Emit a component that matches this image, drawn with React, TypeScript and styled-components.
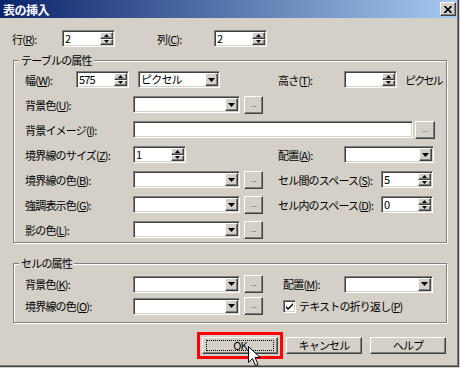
import React from 'react';
import styled, { createGlobalStyle } from 'styled-components';

const GlobalStyle = createGlobalStyle`
  html, body {
    margin: 0;
    padding: 0;
    background: #d4d0c8;
  }
  body {
    font-family: "Noto Sans CJK JP", "Noto Sans", sans-serif;
    font-size: 11px;
    color: #000;
  }
  * {
    box-sizing: border-box;
  }
`;

const Window = styled.div`
  position: relative;
  width: 460px;
  height: 368px;
  background: #d4d0c8;
  padding: 0 3px 3px 0;
  box-shadow: inset -1px -1px 0 #d4d0c8, inset -2px -2px 0 #404040, inset -3px -3px 0 #808080;
  overflow: hidden;
`;

const TitleBar = styled.div`
  display: flex;
  align-items: center;
  justify-content: space-between;
  height: 18px;
  padding: 0 1px 0 3px;
  background: linear-gradient(to right, #0a246a, #a6caf0);
`;

const Title = styled.span`
  color: #fff;
  font-weight: bold;
  font-size: 12px;
  letter-spacing: -0.5px;
`;

const raised = `
  background: #d4d0c8;
  border: 1px solid;
  border-color: #fff #404040 #404040 #fff;
  box-shadow: inset -1px -1px 0 #808080;
`;

const CloseButton = styled.div`
  ${raised}
  display: flex;
  align-items: center;
  justify-content: center;
  width: 16px;
  height: 14px;
`;

const Body = styled.div`
  padding: 12px 11px 0 12px;
`;

const TopRow = styled.div`
  display: flex;
  align-items: center;
  height: 17px;
`;

const Label = styled.span<{ $w?: number; $ml?: number }>`
  flex: none;
  width: ${(p) => (p.$w ? `${p.$w}px` : 'auto')};
  margin-left: ${(p) => p.$ml ?? 0}px;
  white-space: nowrap;
  letter-spacing: -0.8px;
  line-height: 14px;
`;

const Group = styled.fieldset<{ $top: number }>`
  width: 434px;
  margin: ${(p) => p.$top}px 0 0 1px;
  padding: 0 10px 0 11px;
  border: 1px solid #808080;
  box-shadow: 1px 1px 0 #fff, inset 1px 1px 0 #fff;
  min-width: 0;
`;

const Legend = styled.legend`
  margin-left: -6px;
  padding: 0 2px;
  line-height: 14px;
  height: 14px;
  letter-spacing: -0.8px;
  background: #d4d0c8;
`;

const Rows = styled.div<{ $pt?: number; $pb?: number }>`
  display: flex;
  flex-direction: column;
  padding: ${(p) => p.$pt ?? 0}px 0 ${(p) => p.$pb ?? 0}px;
`;

const Row = styled.div<{ $h: number }>`
  display: flex;
  align-items: center;
  height: ${(p) => p.$h}px;
`;

const Cell = styled.div<{ $w?: number }>`
  display: flex;
  align-items: center;
  flex: none;
  width: ${(p) => (p.$w ? `${p.$w}px` : 'auto')};
`;

const Sunken = styled.div<{ $w: number; $ml?: number }>`
  display: flex;
  align-items: center;
  flex: none;
  width: ${(p) => p.$w}px;
  height: 17px;
  margin-left: ${(p) => p.$ml ?? 0}px;
  padding: 1px;
  background: #fff;
  border: 1px solid;
  border-color: #808080 #fff #fff #808080;
  box-shadow: inset 1px 1px 0 #404040, inset -1px -1px 0 #d4d0c8;
`;

const Value = styled.span`
  flex: 1;
  padding-left: 1px;
  line-height: 13px;
  letter-spacing: -0.8px;
  white-space: nowrap;
`;

const SpinButtons = styled.div`
  display: flex;
  flex-direction: column;
  align-self: stretch;
  width: 13px;
`;

const SpinHalf = styled.div`
  ${raised}
  flex: 1;
  display: flex;
  align-items: center;
  justify-content: center;
`;

const DropButton = styled.div`
  ${raised}
  display: flex;
  align-items: center;
  justify-content: center;
  align-self: stretch;
  width: 13px;
`;

const DotsButton = styled.div<{ $w: number; $ml: number }>`
  ${raised}
  flex: none;
  display: flex;
  align-items: flex-end;
  justify-content: center;
  width: ${(p) => p.$w}px;
  height: 18px;
  margin-left: ${(p) => p.$ml}px;
  padding-bottom: 4px;
  font-family: "DejaVu Sans", sans-serif;
  font-size: 7px;
  line-height: 7px;
  color: #404040;
`;

const Unit = styled.span`
  margin-left: 8px;
  letter-spacing: -1.8px;
  white-space: nowrap;
`;

const CheckBox = styled.div`
  flex: none;
  display: flex;
  align-items: center;
  justify-content: center;
  width: 13px;
  height: 13px;
  margin-right: 3px;
  background: #fff;
  border: 1px solid;
  border-color: #808080 #fff #fff #808080;
  box-shadow: inset 1px 1px 0 #404040, inset -1px -1px 0 #d4d0c8;
`;

const ButtonRow = styled.div`
  display: flex;
  justify-content: flex-end;
  gap: 8px;
  margin-top: 14px;
`;

const PushButton = styled.div<{ $focused?: boolean }>`
  ${raised}
  position: relative;
  display: flex;
  align-items: center;
  justify-content: center;
  width: 76px;
  height: 17px;
  letter-spacing: -0.8px;
  line-height: 13px;
  outline: ${(p) => (p.$focused ? '3px solid #ff0000' : 'none')};
  outline-offset: 2px;
  &::after {
    content: '';
    display: ${(p) => (p.$focused ? 'block' : 'none')};
    position: absolute;
    inset: 2px 3px;
    border: 1px dotted #000;
  }
`;

const Cursor = styled.svg`
  position: absolute;
  left: 248px;
  top: 346px;
`;

function Up() {
  return (
    <svg width="5" height="3" viewBox="0 0 5 3">
      <path d="M2.5 0 L5 3 L0 3 Z" fill="#000" />
    </svg>
  );
}

function Down() {
  return (
    <svg width="5" height="3" viewBox="0 0 5 3">
      <path d="M0 0 L5 0 L2.5 3 Z" fill="#000" />
    </svg>
  );
}

function Spin({ w, value, ml }: { w: number; value?: string; ml?: number }) {
  return (
    <Sunken $w={w} $ml={ml}>
      <Value>{value}</Value>
      <SpinButtons>
        <SpinHalf>
          <Up />
        </SpinHalf>
        <SpinHalf>
          <Down />
        </SpinHalf>
      </SpinButtons>
    </Sunken>
  );
}

function Select({ w, value, ml }: { w: number; value?: string; ml?: number }) {
  return (
    <Sunken $w={w} $ml={ml}>
      <Value>{value}</Value>
      <DropButton>
        <svg width="7" height="4" viewBox="0 0 7 4">
          <path d="M0 0 L7 0 L3.5 4 Z" fill="#000" />
        </svg>
      </DropButton>
    </Sunken>
  );
}

function ColorPick() {
  return (
    <>
      <Select w={107} />
      <DotsButton $w={19} $ml={4}>...</DotsButton>
    </>
  );
}

export default function App() {
  return (
    <>
      <GlobalStyle />
      <Window>
        <TitleBar>
          <Title>表の挿入</Title>
          <CloseButton>
            <svg width="8" height="7" viewBox="0 0 8 7">
              <path d="M0.5 0 L7.5 7 M7.5 0 L0.5 7" stroke="#000" strokeWidth="1.6" />
            </svg>
          </CloseButton>
        </TitleBar>

        <Body>
          <TopRow>
            <Label $w={50}>
              行(<u>R</u>):
            </Label>
            <Spin w={53} value="2" />
            <Label $w={57} $ml={42}>
              列(<u>C</u>):
            </Label>
            <Spin w={53} value="2" />
          </TopRow>

          {/* テーブルの属性 */}
          <Group $top={6}>
            <Legend>テーブルの属性</Legend>
            <Rows>
              <Row $h={25}>
                <Cell $w={253}>
                  <Label $w={51}>
                    幅(<u>W</u>):
                  </Label>
                  <Spin w={53} value="575" />
                  <Select w={82} value="ピクセル" ml={9} />
                </Cell>
                <Cell>
                  <Label $w={66}>
                    高さ(<u>T</u>):
                  </Label>
                  <Spin w={53} />
                  <Unit>ピクセル</Unit>
                </Cell>
              </Row>
              <Row $h={25}>
                <Cell $w={253}>
                  <Label $w={108}>
                    背景色(<u>U</u>):
                  </Label>
                  <ColorPick />
                </Cell>
              </Row>
              <Row $h={25}>
                <Label $w={108}>
                  背景イメージ(<u>I</u>):
                </Label>
                <Sunken $w={280} />
                <DotsButton $w={20} $ml={2}>...</DotsButton>
              </Row>
              <Row $h={25}>
                <Cell $w={253}>
                  <Label $w={108}>
                    境界線のサイズ(<u>Z</u>):
                  </Label>
                  <Spin w={53} value="1" />
                </Cell>
                <Cell>
                  <Label $w={66}>
                    配置(<u>A</u>):
                  </Label>
                  <Select w={90} />
                </Cell>
              </Row>
              <Row $h={25}>
                <Cell $w={253}>
                  <Label $w={108}>
                    境界線の色(<u>B</u>):
                  </Label>
                  <ColorPick />
                </Cell>
                <Cell>
                  <Label $w={103}>
                    セル間のスペース(<u>S</u>):
                  </Label>
                  <Spin w={52} value="5" />
                </Cell>
              </Row>
              <Row $h={25}>
                <Cell $w={253}>
                  <Label $w={108}>
                    強調表示色(<u>G</u>):
                  </Label>
                  <ColorPick />
                </Cell>
                <Cell>
                  <Label $w={103}>
                    セル内のスペース(<u>D</u>):
                  </Label>
                  <Spin w={52} value="0" />
                </Cell>
              </Row>
              <Row $h={25}>
                <Cell $w={253}>
                  <Label $w={108}>
                    影の色(<u>L</u>):
                  </Label>
                  <ColorPick />
                </Cell>
              </Row>
            </Rows>
          </Group>

          {/* セルの属性 */}
          <Group $top={13}>
            <Legend>セルの属性</Legend>
            <Rows $pt={3} $pb={5}>
              <Row $h={22}>
                <Cell $w={258}>
                  <Label $w={108}>
                    背景色(<u>K</u>):
                  </Label>
                  <ColorPick />
                </Cell>
                <Cell>
                  <Label $w={61}>
                    配置(<u>M</u>):
                  </Label>
                  <Select w={89} />
                </Cell>
              </Row>
              <Row $h={22}>
                <Cell $w={258}>
                  <Label $w={108}>
                    境界線の色(<u>O</u>):
                  </Label>
                  <ColorPick />
                </Cell>
                <Cell>
                  <CheckBox>
                    <svg width="7" height="7" viewBox="0 0 7 7">
                      <path d="M0 3 L0 5 L2 7 L7 2 L7 0 L2 5 Z" fill="#000" />
                    </svg>
                  </CheckBox>
                  <Label>
                    テキストの折り返し(<u>P</u>)
                  </Label>
                </Cell>
              </Row>
            </Rows>
          </Group>

          <ButtonRow>
            <PushButton $focused>OK</PushButton>
            <PushButton>キャンセル</PushButton>
            <PushButton>ヘルプ</PushButton>
          </ButtonRow>
        </Body>

        <Cursor width="13" height="21" viewBox="0 0 13 21">
          <path
            d="M0.5 0.5 L0.5 16.5 L4.5 12.5 L7.5 19.5 L10 18.5 L7 11.5 L12 11.5 Z"
            fill="#fff"
            stroke="#000"
            strokeWidth="1"
          />
        </Cursor>
      </Window>
    </>
  );
}
